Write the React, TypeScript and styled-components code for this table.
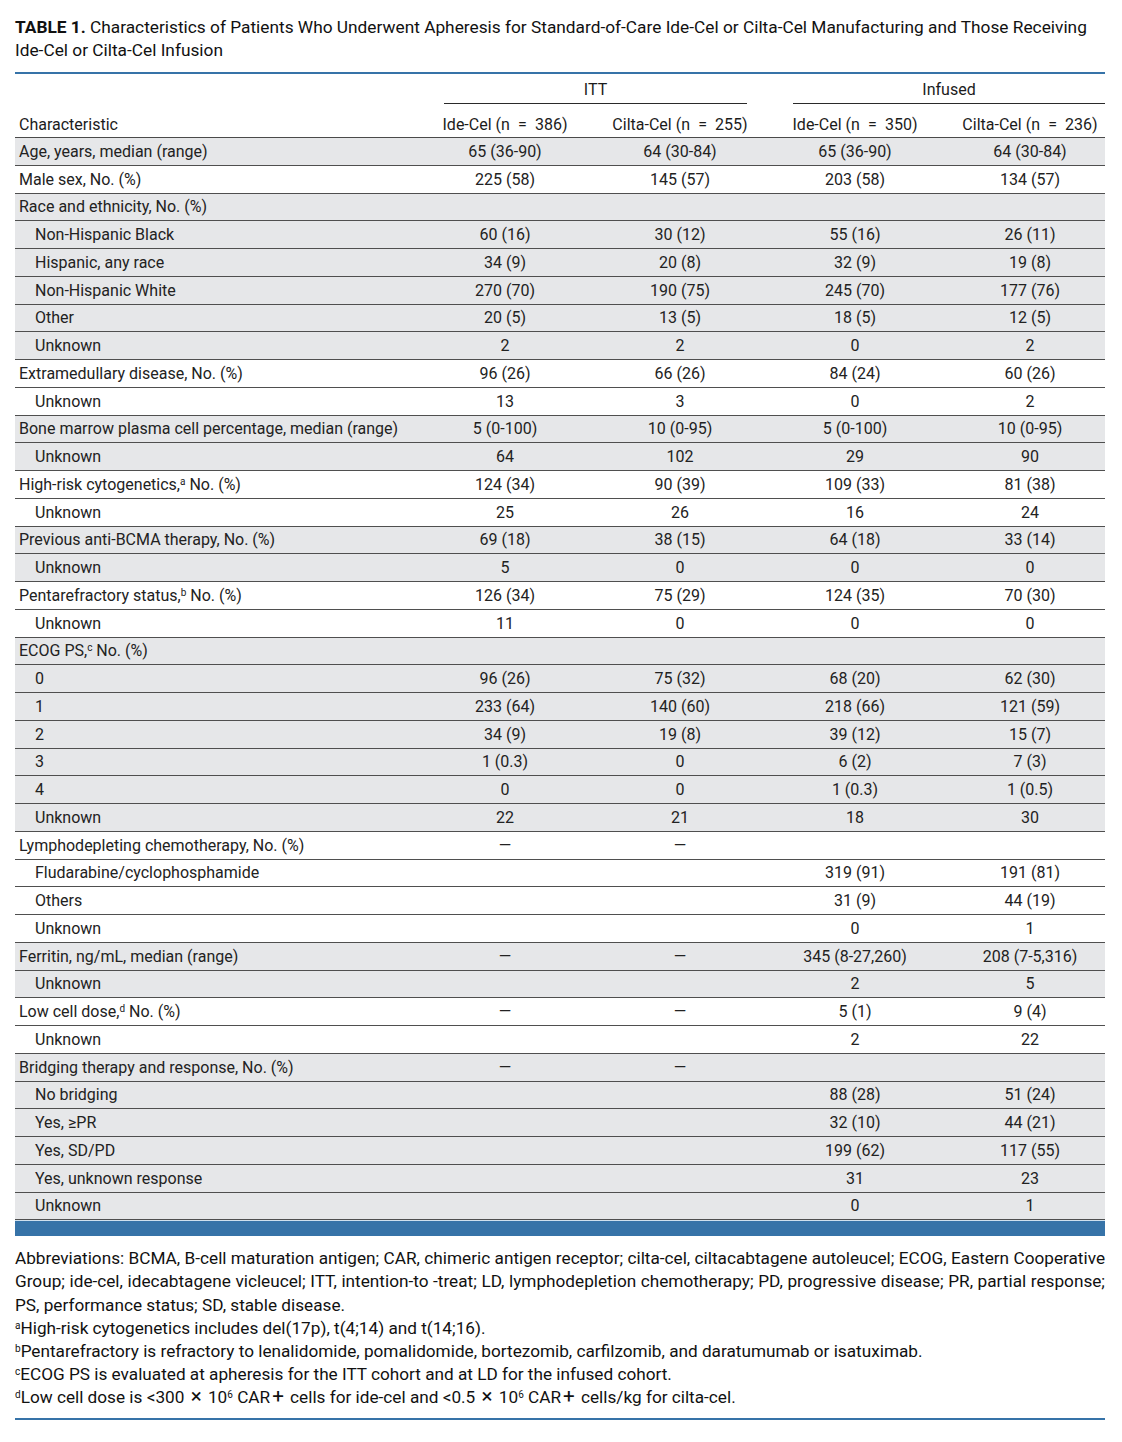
import React from "react";
import styled, { createGlobalStyle } from "styled-components";

const Global = createGlobalStyle`
  html, body { margin: 0; padding: 0; background: #ffffff; }
  body { font-family: Roboto, "Liberation Sans", Arial, sans-serif; color: #1c1c1c; }
`;

const COLS = "390px 200px 150px 200px 150px";
const BLUE = "#3673a8";
const SP = "\u2002";

const Page = styled.div`
  width: 1090px;
  padding: 16px 17px 20px 15px;
`;

const Title = styled.div`
  font-size: 17.3px;
  line-height: 23px;
  color: #111;
  margin-bottom: 10px;
  b { font-weight: 700; }
`;

const Rule = styled.div`
  height: 2px;
  background: ${BLUE};
`;

const SpanRow = styled.div`
  display: grid;
  grid-template-columns: ${COLS};
  height: 30px;
`;

const Spanner = styled.div<{ $start: number; $ml: number; $mr: number }>`
  grid-column: ${(p) => p.$start} / span 2;
  margin-left: ${(p) => p.$ml}px;
  margin-right: ${(p) => p.$mr}px;
  border-bottom: 1px solid #2a2a2a;
  display: flex;
  align-items: center;
  justify-content: center;
  font-size: 16px;
  padding-top: 2px;
`;

const HeadRow = styled.div`
  display: grid;
  grid-template-columns: ${COLS};
  height: 33px;
  align-items: end;
  border-bottom: 1px solid #4a4a4a;
  font-size: 16px;
`;

const HeadCell = styled.div<{ $left?: boolean }>`
  text-align: ${(p) => (p.$left ? "left" : "center")};
  padding-left: ${(p) => (p.$left ? "4px" : "0")};
  padding-bottom: 3px;
  white-space: nowrap;
`;

const Row = styled.div<{ $shade: boolean }>`
  display: grid;
  grid-template-columns: ${COLS};
  box-sizing: border-box;
  height: 27.75px;
  align-items: center;
  background: ${(p) => (p.$shade ? "#e6e7e9" : "#ffffff")};
  border-bottom: 1px solid #4f4f4f;
  font-size: 16px;
  color: #222;
`;

const LabelCell = styled.div<{ $indent: boolean }>`
  padding-left: ${(p) => (p.$indent ? "20px" : "4px")};
  white-space: nowrap;
`;

const ValueCell = styled.div`
  text-align: center;
  white-space: nowrap;
`;

const Sup = styled.sup`
  font-size: 10px;
  line-height: 0;
  vertical-align: 0.5em;
`;

const Op = styled.span`
  font-size: 1.2em;
  line-height: 0;
  padding: 0 2px;
`;

const Bar = styled.div`
  height: 15px;
  background: ${BLUE};
  border-top: 1px solid #cfe0ee;
`;

const Notes = styled.div`
  margin-top: 11px;
  margin-bottom: 8px;
  font-size: 17.2px;
  line-height: 23.2px;
  color: #111;
`;

const Note = styled.p<{ $justify?: boolean }>`
  margin: 0;
  text-align: ${(p) => (p.$justify ? "justify" : "left")};
`;

type RowData = {
  label: React.ReactNode;
  indent?: boolean;
  v: string[];
  shade: boolean;
};

const D = "—";
const E = ["", "", "", ""];

const rows: RowData[] = [
  { label: "Age, years, median (range)", v: ["65 (36-90)", "64 (30-84)", "65 (36-90)", "64 (30-84)"], shade: true },
  { label: "Male sex, No. (%)", v: ["225 (58)", "145 (57)", "203 (58)", "134 (57)"], shade: false },
  { label: "Race and ethnicity, No. (%)", v: E, shade: true },
  { label: "Non-Hispanic Black", indent: true, v: ["60 (16)", "30 (12)", "55 (16)", "26 (11)"], shade: true },
  { label: "Hispanic, any race", indent: true, v: ["34 (9)", "20 (8)", "32 (9)", "19 (8)"], shade: true },
  { label: "Non-Hispanic White", indent: true, v: ["270 (70)", "190 (75)", "245 (70)", "177 (76)"], shade: true },
  { label: "Other", indent: true, v: ["20 (5)", "13 (5)", "18 (5)", "12 (5)"], shade: true },
  { label: "Unknown", indent: true, v: ["2", "2", "0", "2"], shade: true },
  { label: "Extramedullary disease, No. (%)", v: ["96 (26)", "66 (26)", "84 (24)", "60 (26)"], shade: false },
  { label: "Unknown", indent: true, v: ["13", "3", "0", "2"], shade: false },
  { label: "Bone marrow plasma cell percentage, median (range)", v: ["5 (0-100)", "10 (0-95)", "5 (0-100)", "10 (0-95)"], shade: true },
  { label: "Unknown", indent: true, v: ["64", "102", "29", "90"], shade: true },
  { label: <>High-risk cytogenetics,<Sup>a</Sup> No. (%)</>, v: ["124 (34)", "90 (39)", "109 (33)", "81 (38)"], shade: false },
  { label: "Unknown", indent: true, v: ["25", "26", "16", "24"], shade: false },
  { label: "Previous anti-BCMA therapy, No. (%)", v: ["69 (18)", "38 (15)", "64 (18)", "33 (14)"], shade: true },
  { label: "Unknown", indent: true, v: ["5", "0", "0", "0"], shade: true },
  { label: <>Pentarefractory status,<Sup>b</Sup> No. (%)</>, v: ["126 (34)", "75 (29)", "124 (35)", "70 (30)"], shade: false },
  { label: "Unknown", indent: true, v: ["11", "0", "0", "0"], shade: false },
  { label: <>ECOG PS,<Sup>c</Sup> No. (%)</>, v: E, shade: true },
  { label: "0", indent: true, v: ["96 (26)", "75 (32)", "68 (20)", "62 (30)"], shade: true },
  { label: "1", indent: true, v: ["233 (64)", "140 (60)", "218 (66)", "121 (59)"], shade: true },
  { label: "2", indent: true, v: ["34 (9)", "19 (8)", "39 (12)", "15 (7)"], shade: true },
  { label: "3", indent: true, v: ["1 (0.3)", "0", "6 (2)", "7 (3)"], shade: true },
  { label: "4", indent: true, v: ["0", "0", "1 (0.3)", "1 (0.5)"], shade: true },
  { label: "Unknown", indent: true, v: ["22", "21", "18", "30"], shade: true },
  { label: "Lymphodepleting chemotherapy, No. (%)", v: [D, D, "", ""], shade: false },
  { label: "Fludarabine/cyclophosphamide", indent: true, v: ["", "", "319 (91)", "191 (81)"], shade: false },
  { label: "Others", indent: true, v: ["", "", "31 (9)", "44 (19)"], shade: false },
  { label: "Unknown", indent: true, v: ["", "", "0", "1"], shade: false },
  { label: "Ferritin, ng/mL, median (range)", v: [D, D, "345 (8-27,260)", "208 (7-5,316)"], shade: true },
  { label: "Unknown", indent: true, v: ["", "", "2", "5"], shade: true },
  { label: <>Low cell dose,<Sup>d</Sup> No. (%)</>, v: [D, D, "5 (1)", "9 (4)"], shade: false },
  { label: "Unknown", indent: true, v: ["", "", "2", "22"], shade: false },
  { label: "Bridging therapy and response, No. (%)", v: [D, D, "", ""], shade: true },
  { label: "No bridging", indent: true, v: ["", "", "88 (28)", "51 (24)"], shade: true },
  { label: "Yes, ≥PR", indent: true, v: ["", "", "32 (10)", "44 (21)"], shade: true },
  { label: "Yes, SD/PD", indent: true, v: ["", "", "199 (62)", "117 (55)"], shade: true },
  { label: "Yes, unknown response", indent: true, v: ["", "", "31", "23"], shade: true },
  { label: "Unknown", indent: true, v: ["", "", "0", "1"], shade: true },
];

const headers = [
  `Ide-Cel (n${SP}=${SP}386)`,
  `Cilta-Cel (n${SP}=${SP}255)`,
  `Ide-Cel (n${SP}=${SP}350)`,
  `Cilta-Cel (n${SP}=${SP}236)`,
];

export default function App() {
  return (
    <Page>
      <Global />
      <Title>
        <b>TABLE 1.</b> Characteristics of Patients Who Underwent Apheresis for Standard-of-Care Ide-Cel or Cilta-Cel
        Manufacturing and Those Receiving Ide-Cel or Cilta-Cel Infusion
      </Title>
      <Rule />
      <SpanRow>
        <Spanner $start={2} $ml={39} $mr={8}>ITT</Spanner>
        <Spanner $start={4} $ml={38} $mr={0}>Infused</Spanner>
      </SpanRow>
      <HeadRow>
        <HeadCell $left>Characteristic</HeadCell>
        {headers.map((h, i) => (
          <HeadCell key={i}>{h}</HeadCell>
        ))}
      </HeadRow>
      {rows.map((r, i) => (
        <Row key={i} $shade={r.shade}>
          <LabelCell $indent={!!r.indent}>{r.label}</LabelCell>
          {r.v.map((v, j) => (
            <ValueCell key={j}>{v}</ValueCell>
          ))}
        </Row>
      ))}
      <Bar />
      <Notes>
        <Note $justify>
          Abbreviations: BCMA, B-cell maturation antigen; CAR, chimeric antigen receptor; cilta-cel, ciltacabtagene
          autoleucel; ECOG, Eastern Cooperative Group; ide-cel, idecabtagene vicleucel; ITT, intention-to -treat; LD,
          lymphodepletion chemotherapy; PD, progressive disease; PR, partial response; PS, performance status; SD, stable
          disease.
        </Note>
        <Note><Sup>a</Sup>High-risk cytogenetics includes del(17p), t(4;14) and t(14;16).</Note>
        <Note>
          <Sup>b</Sup>Pentarefractory is refractory to lenalidomide, pomalidomide, bortezomib, carfilzomib, and
          daratumumab or isatuximab.
        </Note>
        <Note><Sup>c</Sup>ECOG PS is evaluated at apheresis for the ITT cohort and at LD for the infused cohort.</Note>
        <Note>
          <Sup>d</Sup>Low cell dose is &lt;300 <Op>×</Op> 10<Sup>6</Sup> CAR<Op>+</Op> cells for ide-cel and &lt;0.5{" "}
          <Op>×</Op> 10<Sup>6</Sup> CAR<Op>+</Op> cells/kg for cilta-cel.
        </Note>
      </Notes>
      <Rule />
    </Page>
  );
}
